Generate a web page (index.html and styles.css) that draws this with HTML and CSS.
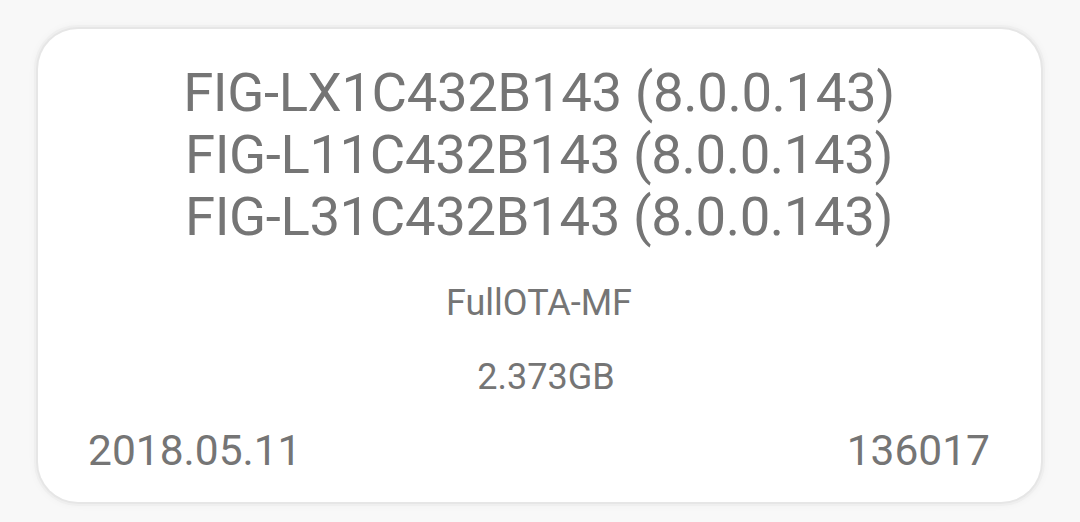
FILE: index.html
```html
<!DOCTYPE html>
<html>
<head>
<meta charset="utf-8">
<link rel="stylesheet" href="styles.css">
</head>
<body>
<div class="card">
  <div class="titles">
    <div class="line">FIG-LX1C432B143 (8.0.0.143)</div>
    <div class="line">FIG-L11C432B143 (8.0.0.143)</div>
    <div class="line">FIG-L31C432B143 (8.0.0.143)</div>
  </div>
  <div class="meta type">FullOTA-MF</div>
  <div class="meta size">2.373GB</div>
  <div class="footer">
    <span>2018.05.11</span>
    <span>136017</span>
  </div>
</div>
</body>
</html>
```

FILE: styles.css
```css
html, body {
  margin: 0;
  padding: 0;
  background: #f8f8f8;
  width: 1080px;
  height: 522px;
  overflow: hidden;
  font-family: Roboto, "Liberation Sans", sans-serif;
  color: #757575;
}
body {
  padding: 29px 39px 20px 38px;
  box-sizing: border-box;
}
.card {
  background: #ffffff;
  border-radius: 40px;
  box-shadow: 0 0 0 2px #e6e6e6, 0 0 0 4px #efefef, 0 0 8px 3px rgba(0,0,0,0.04);
  height: 473px;
  box-sizing: border-box;
  padding: 32px 51px 0 50px;
  display: flex;
  flex-direction: column;
  align-items: stretch;
}
.titles {
  text-align: center;
  font-size: 54.5px;
  letter-spacing: -0.4px;
  line-height: 62px;
}
.meta {
  text-align: center;
  font-size: 36px;
  line-height: 36px;
}
.type { margin-top: 38px; }
.size {
  margin-top: 38px;
  padding-left: 14px;
}
.footer {
  margin-top: 35px;
  display: flex;
  justify-content: space-between;
  font-size: 42.5px;
  line-height: 42px;
}
```
